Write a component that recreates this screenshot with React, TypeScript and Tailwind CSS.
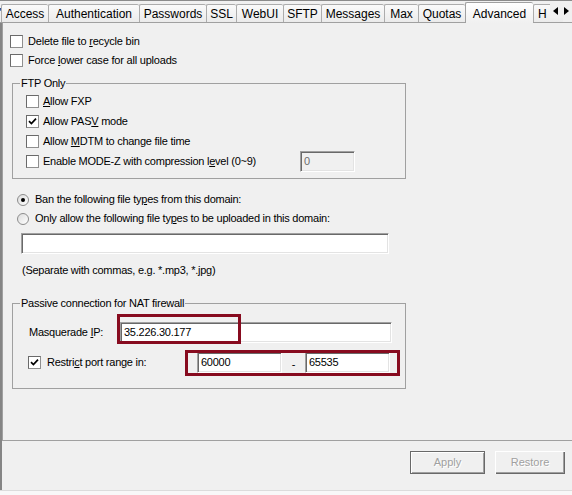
import React from 'react'

// Win32-style "Advanced" property page

const tabs = [
  { label: 'Access', w: 'w-[47px]' },
  { label: 'Authentication', w: 'w-[91px]' },
  { label: 'Passwords', w: 'w-[67px]' },
  { label: 'SSL', w: 'w-[30px]' },
  { label: 'WebUI', w: 'w-[47px]' },
  { label: 'SFTP', w: 'w-[38px]' },
  { label: 'Messages', w: 'w-[63px]' },
  { label: 'Max', w: 'w-[34px]' },
  { label: 'Quotas', w: 'w-[47px]' },
  { label: 'Advanced', w: 'w-[68px]', active: true },
  { label: 'H', w: 'w-[30px] justify-start pl-[4px]' },
]

function Check({ checked = false }: { checked?: boolean }) {
  return (
    <span className="w-[13px] h-[13px] shrink-0 border border-[#8f8f8f] border-t-[#6a6a6a] border-l-[#6a6a6a] bg-white flex items-center justify-center">
      {checked && (
        <svg width="9" height="9" viewBox="0 0 9 9">
          <path d="M1 4.2 L3.4 6.6 L8 1.6" stroke="#000" strokeWidth="1.7" fill="none" />
        </svg>
      )}
    </span>
  )
}

function Radio({ checked = false }: { checked?: boolean }) {
  return (
    <span className="w-[12px] h-[12px] shrink-0 rounded-full border border-[#8c8c8c] bg-gradient-to-br from-[#dcdcdc] to-white flex items-center justify-center">
      {checked && <span className="w-[4px] h-[4px] rounded-full bg-black" />}
    </span>
  )
}

function Field({ value = '', className = '', disabled = false }: { value?: string; className?: string; disabled?: boolean }) {
  return (
    <div
      className={`h-[21px] shrink-0 border border-[#a0a0a0] border-b-white border-r-white shadow-[inset_1px_1px_0_#696969,inset_-1px_-1px_0_#e3e3e3] flex items-center pl-[3px] ${
        disabled ? 'bg-[#f0f0f0] text-[#6d6d6d]' : 'bg-white text-black'
      } ${className}`}
    >
      {value}
    </div>
  )
}

export default function App() {
  return (
    <div className="relative w-[572px] h-[495px] bg-[#f0f0f0] flex flex-col overflow-hidden font-['Liberation_Sans',Arial,sans-serif] text-[11px] text-black tracking-[-0.25px]">
      {/* tab strip */}
      <div className="relative h-[23px] shrink-0 flex items-end border-t border-b border-[#8b8b8b] border-b-[#a0a0a0] tracking-normal">
        <div className="w-[2px] h-[18px] text-[12px] leading-[18px] -ml-px">
          <span>'</span>
        </div>
        {tabs.map((t) =>
          t.active ? (
            <div
              key={t.label}
              className={`${t.w} relative z-10 -mb-px h-[21px] shrink-0 border-l border-t border-[#a0a0a0] rounded-t-[2px] bg-gradient-to-b from-white to-[#f0f0f0] text-[12px] flex justify-center pt-[2px]`}
            >
              {t.label}
            </div>
          ) : (
            <div
              key={t.label}
              className={`h-[18px] shrink-0 border-l border-t border-[#acacac] rounded-t-[2px] bg-gradient-to-b from-[#fafafa] to-[#ebebeb] text-[12px] flex justify-center pt-[1px] leading-[16px] overflow-hidden ${t.w}`}
            >
              {t.label}
            </div>
          )
        )}
        <div className="absolute right-0 top-[2px] w-[22px] h-[15px] bg-[#f0f0f0] flex items-center justify-between px-[3px]">
          <svg width="5" height="8" viewBox="0 0 5 8"><path d="M5 0 L0 4 L5 8 Z" fill="#000" /></svg>
          <svg width="5" height="8" viewBox="0 0 5 8"><path d="M0 0 L5 4 L0 8 Z" fill="#000" /></svg>
        </div>
      </div>

      <div className="flex-1 flex flex-col border-l-2 border-[#858585]">
        {/* page */}
        <div className="h-[418px] shrink-0 border-l border-b border-[#a0a0a0] flex flex-col pt-[9px]">
          <div className="h-[19px] ml-[7px] flex items-center gap-[5px] tracking-[-0.2px]">
            <Check />
            <span>Delete file to <span className="underline">r</span>ecycle bin</span>
          </div>
          <div className="h-[19px] ml-[7px] flex items-center gap-[5px] tracking-[-0.2px]">
            <Check />
            <span>Force <span className="underline">l</span>ower case for all uploads</span>
          </div>

          {/* FTP Only */}
          <div className="relative mt-[13px] ml-[9px] w-[394px] h-[96px] shrink-0 border border-[#a0a0a0] pt-[7px] pl-[13px]">
            <span className="absolute left-[7px] -top-[7px] px-[1px] bg-[#f0f0f0] leading-[13px]">FTP Only</span>
            <div className="h-[20px] flex items-center gap-[4px]">
              <Check />
              <span><span className="underline">A</span>llow FXP</span>
            </div>
            <div className="h-[20px] flex items-center gap-[4px]">
              <Check checked />
              <span>Allow PAS<span className="underline">V</span> mode</span>
            </div>
            <div className="h-[20px] flex items-center gap-[4px]">
              <Check />
              <span>Allow <span className="underline">M</span>DTM to change file time</span>
            </div>
            <div className="h-[20px] flex items-center">
              <div className="w-[274px] flex items-center gap-[4px]">
                <Check />
                <span>Enable MODE-Z with compression l<span className="underline">e</span>vel (0~9)</span>
              </div>
              <Field value="0" disabled className="w-[55px]" />
            </div>
          </div>

          {/* file types */}
          <div className="mt-[11px] ml-[14px] h-[19px] flex items-center gap-[6px]">
            <Radio checked />
            <span>Ban the following file ty<span className="underline">p</span>es from this domain:</span>
          </div>
          <div className="ml-[14px] h-[19px] flex items-center gap-[6px]">
            <Radio />
            <span>Only allow the following file ty<span className="underline">p</span>es to be uploaded in this domain:</span>
          </div>
          <Field className="mt-[5px] ml-[18px] w-[368px]" />
          <div className="mt-[9px] ml-[19px] leading-[14px]">(Separate with commas, e.g. *.mp3, *.jpg)</div>

          {/* NAT */}
          <div className="relative mt-[26px] ml-[9px] w-[394px] h-[86px] shrink-0 border border-[#a0a0a0] pt-[18px]">
            <span className="absolute left-[7px] -top-[7px] px-[1px] bg-[#f0f0f0] leading-[13px]">Passive connection for NAT firewall</span>
            <div className="h-[21px] pl-[16px] flex items-center">
              <span className="w-[91px] shrink-0">Masquerade <span className="underline">I</span>P:</span>
              <Field value="35.226.30.177" className="w-[272px]" />
            </div>
            <div className="mt-[9px] h-[21px] pl-[15px] flex items-center">
              <div className="w-[169px] shrink-0 flex items-center gap-[6px]">
                <Check checked />
                <span>Restri<span className="underline">c</span>t port range in:</span>
              </div>
              <Field value="60000" className="w-[85px]" />
              <span className="w-[23px] text-center pt-[3px]">-</span>
              <Field value="65535" className="w-[85px]" />
            </div>
          </div>
        </div>

        {/* buttons */}
        <div className="flex-1 flex justify-end items-start gap-[10px] pt-[10px] pr-[7px] tracking-normal">
          <div className="w-[75px] h-[23px] border border-[#696969] bg-[#f0f0f0] shadow-[inset_1px_1px_0_#fff,inset_-1px_-1px_0_#a0a0a0] flex items-center justify-center text-[#a0a0a0] [text-shadow:1px_1px_0_#fff]">
            Apply
          </div>
          <div className="w-[70px] h-[23px] bg-[#f0f0f0] shadow-[inset_1px_1px_0_#fff,inset_-1px_-1px_0_#696969,inset_-2px_-2px_0_#a0a0a0] flex items-center justify-center text-[#a0a0a0] [text-shadow:1px_1px_0_#fff]">
            Restore
          </div>
        </div>
      </div>
      <div className="h-[5px] shrink-0 border-t border-[#dcdcdc] bg-[#f8f8f8]" />

      {/* annotation boxes */}
      <div className="absolute left-[117px] top-[314px] w-[124px] h-[30px] border-[3px] border-[#870b1f]" />
      <div className="absolute left-[185px] top-[350px] w-[215px] h-[26px] border-[3px] border-[#870b1f]" />
    </div>
  )
}
